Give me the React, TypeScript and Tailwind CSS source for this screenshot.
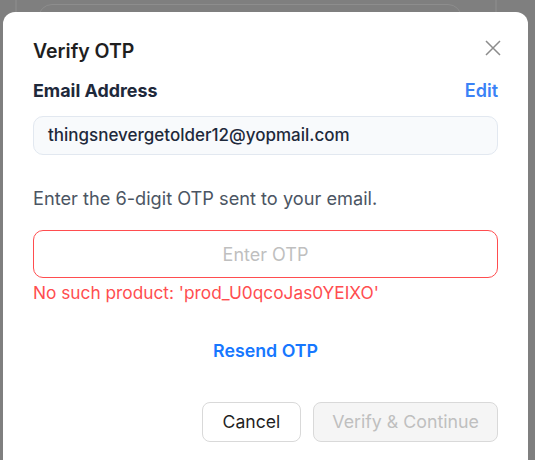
import React, { useState } from 'react';

const App: React.FC = () => {
  const [otp, setOtp] = useState('');

  return (
    <div className="relative w-[535px] h-[460px] overflow-hidden bg-[#7f7f7f] font-['Inter',sans-serif]">
      {/* dimmed page behind the modal */}
      <div className="absolute left-[15px] top-0 w-[2px] h-[20px] bg-[#878787]" />
      <div className="absolute left-[495px] top-0 w-[2px] h-[20px] bg-[#878787]" />
      <div className="absolute left-[38px] top-[4px] w-[424px] h-[40px] rounded-[14px] border border-[#8d8d8d]" />

      <div className="relative ml-[3px] mt-[12px] w-[525px] h-[470px] bg-white rounded-[12px] px-[30px] pt-[25px]">
        <div className="flex items-center justify-between">
          <h2 className="text-[19.5px] leading-[28px] font-semibold text-[#1f1f1f]">Verify OTP</h2>
          <button className="mr-[-5px] mt-[-6px] text-[#8c8c8c]">
            <svg width="20" height="20" viewBox="0 0 20 20" fill="none" stroke="currentColor" strokeWidth="1.5">
              <path d="M3 3l14 14M17 3L3 17" />
            </svg>
          </button>
        </div>

        <div className="mt-[13px] flex items-center justify-between">
          <span className="text-[17.9px] leading-[25px] font-bold text-[#1e293b]">Email Address</span>
          <button className="text-[18px] leading-[25px] font-semibold text-[#3b82f6]">Edit</button>
        </div>

        <div className="mt-[13px] h-[39px] flex items-center px-[14px] rounded-[10px] border border-[#e2e8f0] bg-[#f8fafc] text-[17px] font-medium text-[#1e293b]">
          thingsnevergetolder12@yopmail.com
        </div>

        <p className="mt-[31px] text-[18.2px] leading-[24px] text-[#4b5563]">
          Enter the 6-digit OTP sent to your email.
        </p>

        <input
          value={otp}
          onChange={(e) => setOtp(e.target.value)}
          placeholder="Enter OTP"
          className="mt-[20px] block w-full h-[48px] rounded-[10px] border border-[#ff4d4f] text-center text-[18px] text-[#1f1f1f] placeholder:text-[#bfbfbf] outline-none"
        />
        <p className="mt-[3px] text-[17.3px] leading-[24px] text-[#ff4d4f]">
          No such product: 'prod_U0qcoJas0YEIXO'
        </p>

        <div className="mt-[34px] flex justify-center">
          <button className="text-[17.8px] leading-[24px] font-semibold text-[#1677ff]">Resend OTP</button>
        </div>

        <div className="mt-[39px] flex justify-end gap-[12px]">
          <button className="h-[40px] px-[20px] rounded-[8px] border border-[#d9d9d9] bg-white text-[17.6px] text-[#1f1f1f]">
            Cancel
          </button>
          <button disabled className="h-[40px] px-[18px] rounded-[8px] border border-[#d9d9d9] bg-[#f5f5f5] text-[17.8px] text-[#bfbfbf]">
            Verify &amp; Continue
          </button>
        </div>
      </div>
    </div>
  );
};

export default App;
